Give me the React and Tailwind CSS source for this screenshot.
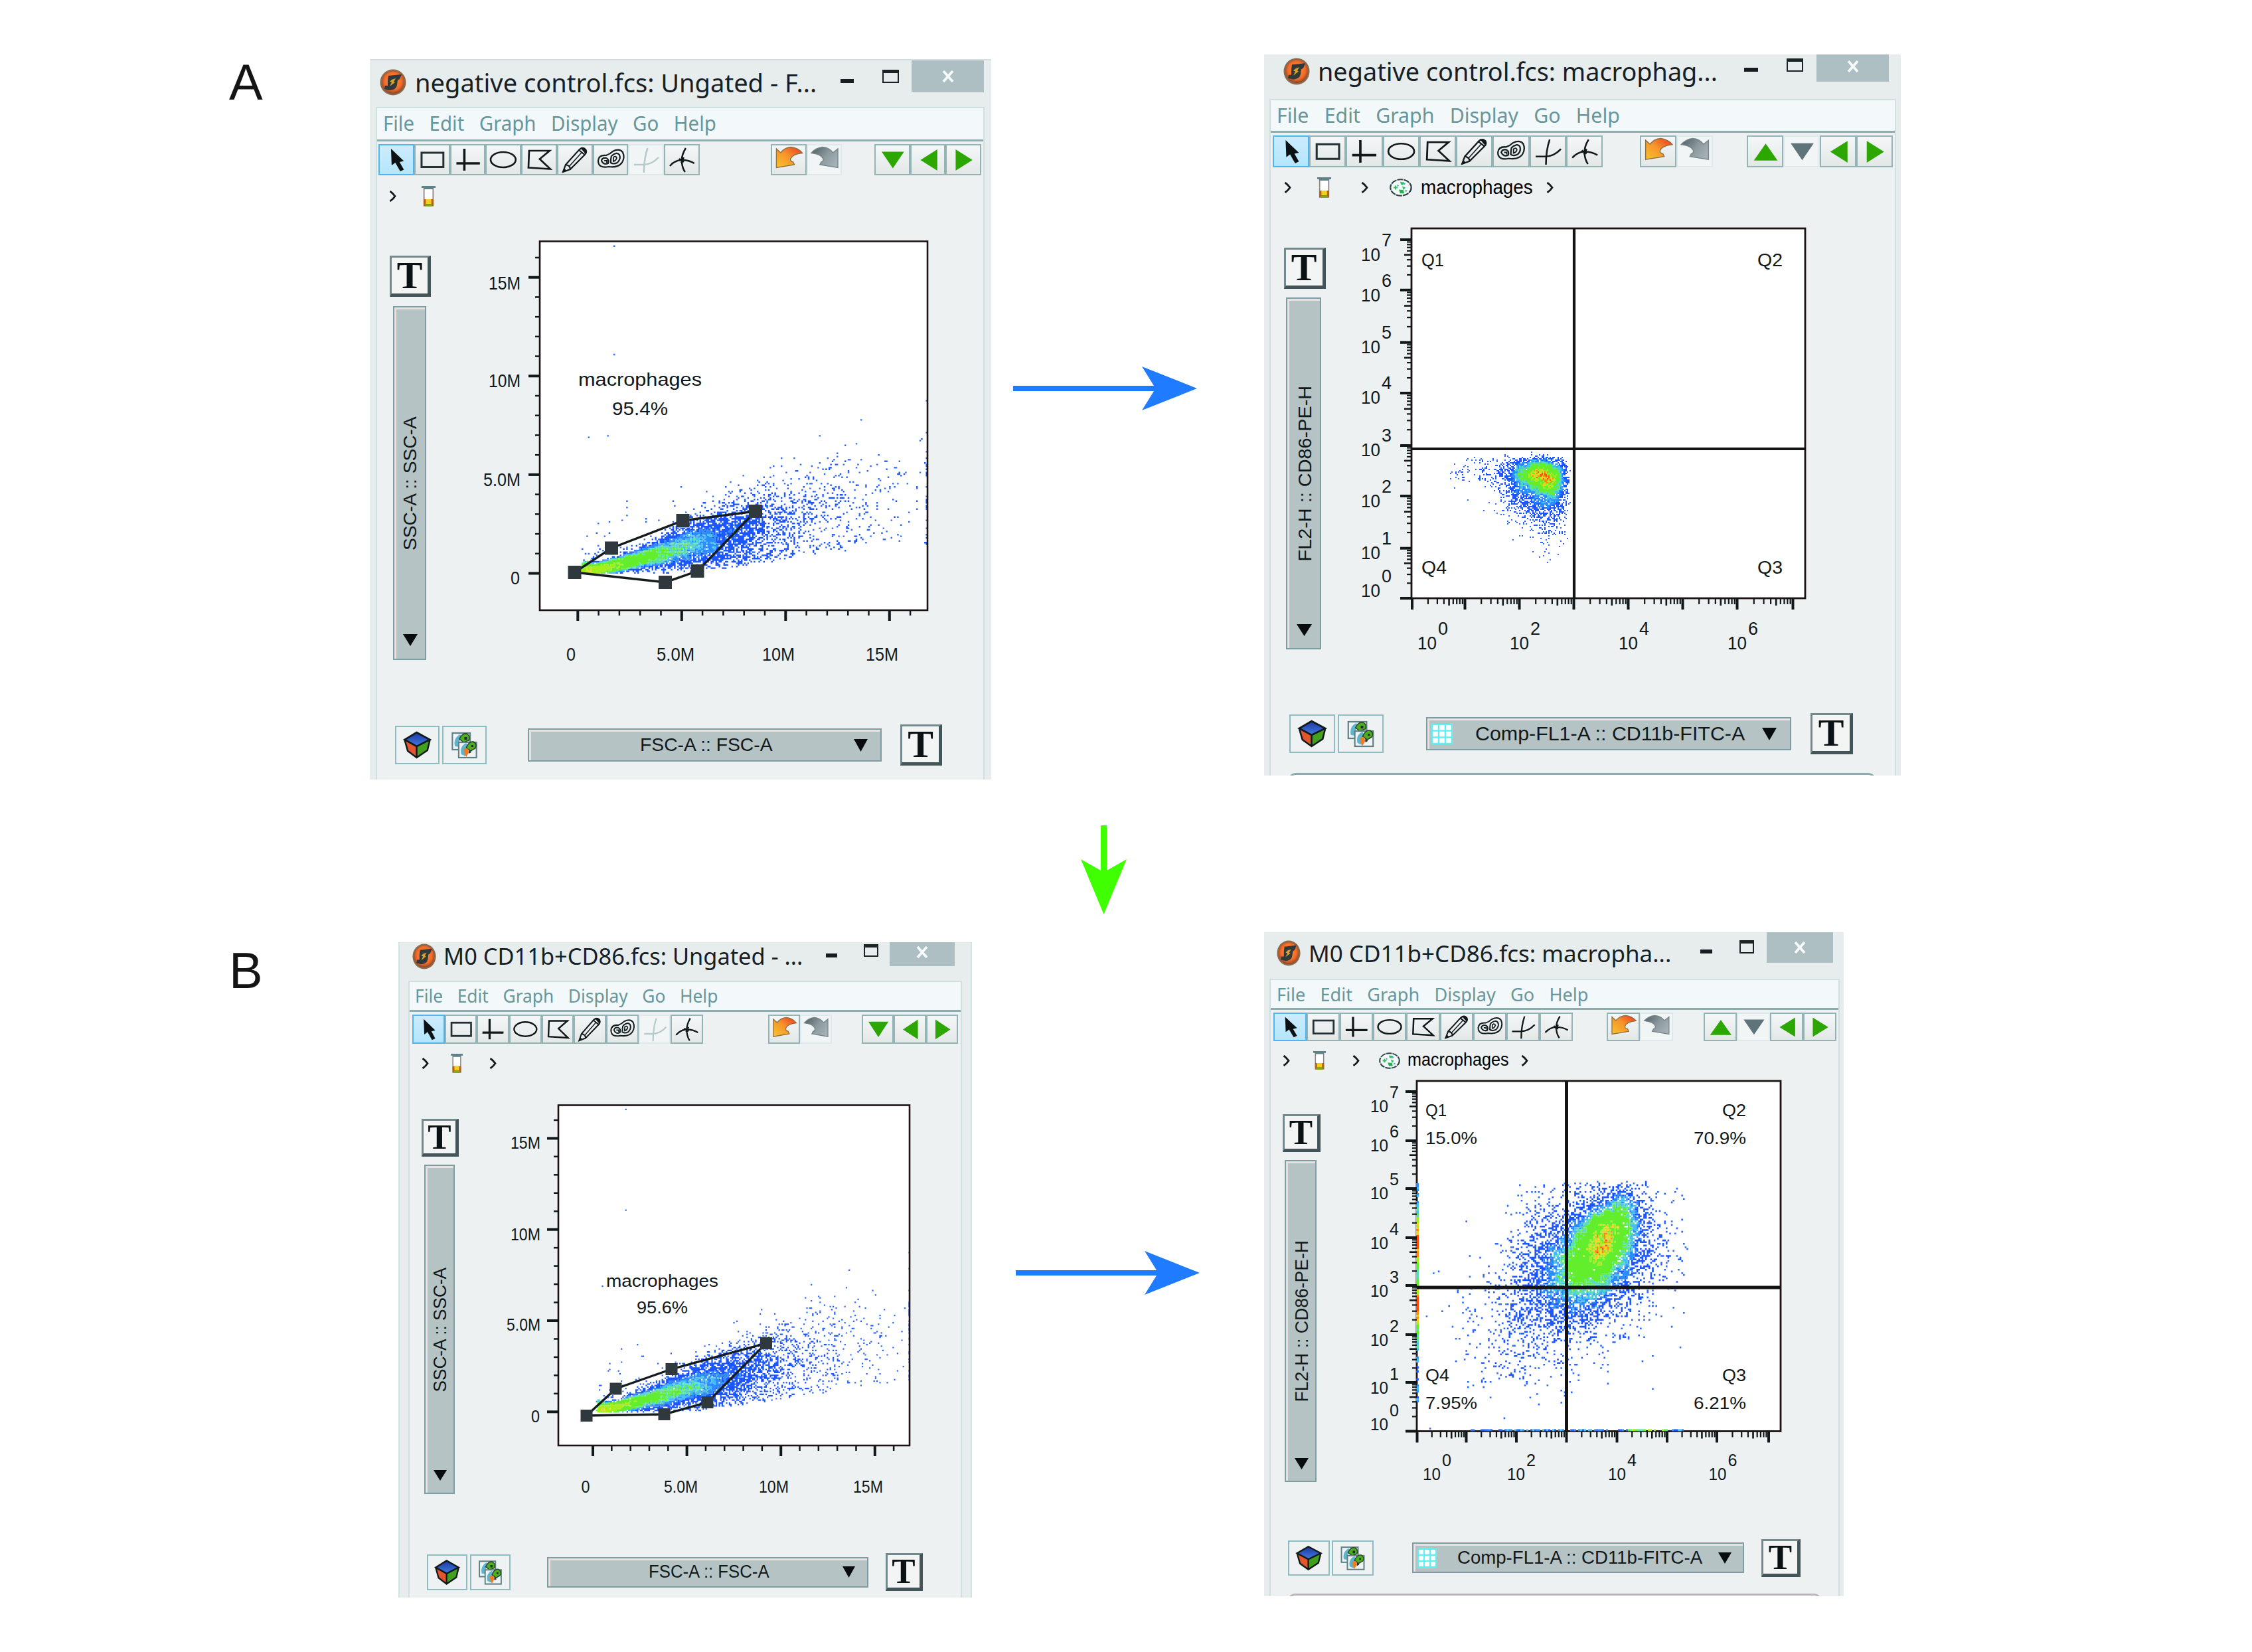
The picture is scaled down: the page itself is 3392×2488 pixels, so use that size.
import { useLayoutEffect, useMemo, useRef } from 'react';

// Small seeded generator, so that the plots look the same on every load
function createRandom(seed) {
  let s = seed;
  const next = () => {
    s = (s + 0x6d2b79f5) | 0;
    let t = Math.imul(s ^ (s >>> 15), 1 | s);
    t = (t + Math.imul(t ^ (t >>> 7), 61 | t)) ^ t;
    return ((t ^ (t >>> 14)) >>> 0) / 4294967296;
  };
  const normal = () => Math.sqrt(-2 * Math.log(1 - next())) * Math.cos(2 * Math.PI * next());
  const exp = (scale) => -Math.log(1 - next()) * scale;
  return { next, normal, exp };
}

// Forward / side scatter events, in millions
function scatterEvents(seed) {
  const r = createRandom(seed);
  const points = [];
  for (let i = 0; i < 10500; i++) {
    const k = r.next();
    let x;
    let slope;
    if (k < 0.45) {
      x = 0.15 + r.exp(1.7);
      slope = 0.25 + r.normal() * 0.07;
    } else if (k < 0.84) {
      x = 4.8 + r.normal() * 2.1;
      slope = 0.27 + r.normal() * 0.1;
    } else {
      x = 8.6 + r.normal() * 2.9;
      slope = 0.28 + r.normal() * 0.12;
    }
    if (x < 0.2) continue;
    if (x > 9 && r.next() < 0.2) continue;
    let y = x * slope + r.normal() * 0.08;
    if (r.next() < 0.012) y += r.exp(0.9);
    const floor = x > 6 ? (x - 6) * 0.15 + 0.15 : 0.06;
    if (y < floor) y = floor + r.next() * 0.6;
    if (y > 3.3 + x * 0.27) continue;
    points.push([Math.min(x, 16.75), y]);
  }
  for (let i = 0; i < 26; i++) points.push([16.75, 1.2 + r.next() * 5]);
  for (let i = 0; i < 60; i++) points.push([11 + r.next() * 5.7, 1.5 + r.next() * 4.3]);
  points.push([1.75, 16.6], [1.75, 11.1], [0.5, 6.9], [1.4, 7], [16.75, 8.8], [13.6, 7.8], [2.3, 3.7], [11.6, 7]);
  return points;
}

function controlEvents() {
  const r = createRandom(11);
  const points = [];
  for (let i = 0; i < 6400; i++) {
    const k = r.next();
    let x;
    let y;
    if (k < 0.42) {
      x = 2319 + r.normal() * 19;
      y = 713 + r.normal() * 11;
    } else if (k < 0.6) {
      x = 2336 + r.normal() * 10;
      y = 728 + r.normal() * 14;
    } else if (k < 0.9) {
      x = 2313 + r.normal() * 25;
      y = 733 + r.normal() * 22;
    } else if (k < 0.95) {
      x = 2295 - r.exp(38);
      y = 708 + r.normal() * 13;
    } else {
      x = 2330 + r.normal() * 17;
      y = 755 + r.exp(26);
    }
    if (x > 2364 - r.exp(5) || y < 690 - r.exp(4) || x < 2183 || y > 850) continue;
    points.push([x, y]);
  }
  return points;
}

function stainedEvents() {
  const r = createRandom(29);
  const points = [];
  for (let i = 0; i < 10200; i++) {
    const k = r.next();
    const a = r.normal();
    const b = r.normal();
    let x;
    let y;
    if (k < 0.3) {
      x = 2418 + a * 22;
      y = 1862 - a * 14 + b * 26;
    } else if (k < 0.62) {
      x = 2396 + a * 36;
      y = 1896 - a * 15 + b * 36;
    } else if (k < 0.93) {
      x = 2388 + a * 56;
      y = 1893 - a * 8 + b * 52;
    } else {
      x = 2325 + a * 58;
      y = 1985 - a * 10 + b * 50;
    }
    if (x < 2140 || y < 1778 || y > 2150 || x > 2540) continue;
    points.push([x, y]);
  }
  return points;
}

const HEAT = ['#2f68ff', '#1c56ff', '#2b8cff', '#45bff0', '#58dfae', '#62ee2c', '#a4ee1c', '#f0d31c', '#ff8a12', '#ff4a08'];

// Bins events into square cells and returns one path for each heat level
function densityPaths(points, cell, limits) {
  const grid = new Map();
  points.forEach(([x, y]) => {
    const key = `${Math.round(x / cell)},${Math.round(y / cell)}`;
    grid.set(key, (grid.get(key) || 0) + 1);
  });
  const paths = HEAT.map(() => '');
  const jitter = createRandom(5);
  grid.forEach((_, key) => {
    const [cx, cy] = key.split(',').map(Number);
    let total = 0;
    for (let dx = -2; dx <= 2; dx++) {
      for (let dy = -2; dy <= 2; dy++) total += grid.get(`${cx + dx},${cy + dy}`) || 0;
    }
    const density = (total / 25) * (0.75 + jitter.next() * 0.5);
    let level = limits.findIndex((limit) => density < limit);
    if (level < 0) level = limits.length;
    const c = cell.toFixed(2);
    paths[level] += `M${(cx * cell).toFixed(1)} ${(cy * cell).toFixed(1)}h${c}v${c}h-${c}z`;
  });
  return paths;
}

function Heat({ points, cell, limits }) {
  const paths = useMemo(() => densityPaths(points, cell, limits), [points, cell, limits]);
  return paths.map((d, i) => d && <path key={HEAT[i]} d={d} fill={HEAT[i]} />);
}

// Squeezes a line of text to the width of its box
function Fit({ className, inner = '', children }) {
  const box = useRef(null);
  const line = useRef(null);
  useLayoutEffect(() => {
    const scale = box.current.clientWidth / line.current.offsetWidth;
    line.current.style.transform = `scaleX(${scale})`;
  }, []);
  return (
    <div ref={box} className={`shrink-0 ${className}`}>
      <span ref={line} className={`inline-flex origin-left whitespace-nowrap ${inner}`}>{children}</span>
    </div>
  );
}

function Label({ x, y, w, size = 27, children }) {
  return (
    <text x={x} y={y - 1} fontSize={size} textLength={w} lengthAdjust="spacingAndGlyphs" fill="#10181a" fontFamily="Liberation Sans, Arial, sans-serif">
      {children}
    </text>
  );
}

function AppIcon({ className }) {
  return (
    <svg viewBox="0 0 40 40" preserveAspectRatio="none" className={`shrink-0 ${className}`}>
      <defs>
        <radialGradient id="ball" cx="0.5" cy="0.45" r="0.55">
          <stop offset="0" stopColor="#ff9a2c" />
          <stop offset="0.7" stopColor="#f26a2a" />
          <stop offset="1" stopColor="#8d4526" />
        </radialGradient>
      </defs>
      <circle cx="20" cy="20" r="19.5" fill="#8a6a4c" />
      <circle cx="20" cy="20" r="17" fill="url(#ball)" />
      <path d="M13 10 L33 8 L30 15 L27 17 L26 24 Q25 31 15 32 L7 30 L8 25 L12 25 L12 17 Z" fill="#30383a" />
      <path d="M18 16 L24 14 L21 19 L23 20 L15 26 L18 20 L15 19 Z" fill="#d9a22e" />
    </svg>
  );
}

const GLYPHS = {
  pointer: <path d="M19 7 L20 32 L25.500 28 L33 41 L38.500 38.500 L32 27 L38.500 25.500 Z" fill="#0c1214" />,
  rect: <rect x="11" y="13" width="33" height="21.500" fill="none" stroke="#243034" strokeWidth="3" />,
  quad: <path d="M21.500 7 V40 M9.500 29 H45" fill="none" stroke="#10181a" strokeWidth="3.600" />,
  ellipse: <ellipse cx="27" cy="23.500" rx="19" ry="11.500" fill="none" stroke="#10181a" strokeWidth="2.600" />,
  polygon: <path d="M12 10 H43 L28 22.500 L44 37.500 L11 35.500 Z" fill="none" stroke="#10181a" strokeWidth="2.700" />,
  pencil: (
    <g fill="none" stroke="#10181a" strokeWidth="2.200">
      <path d="M9 42 L13 31 L34 8 Q39 4 43 8 Q46 12 42 16 L20 38 Z M13 31 Q20 32 20 38 M33 9 L42 16" />
      <path d="M18 34 L37 13" strokeWidth="1.500" />
      <path d="M9 42 L11 37 L14 40 Z M36 6 L44 8 L43 14 Z" fill="#10181a" strokeWidth="1" />
    </g>
  ),
  contour: (
    <g fill="none" stroke="#141d20" strokeWidth="2.200">
      <path d="M8 25 Q9 16 20 17 Q26 15 30 11 Q40 6 45 12 Q49 20 44 28 Q38 36 24 34 Q8 37 8 25 Z" />
      <path d="M28 18 Q36 11 40 16 Q43 22 37 28 Q31 31 27 28 Q27 22 28 18 M13 25 Q14 20 20 21 Q25 23 23 29 Q16 32 13 25 Z" />
      <path d="M17 25 H21 V28 M31 20 Q35 17 36 21 Q35 25 31 26 Z" strokeWidth="1.800" />
    </g>
  ),
  angled: <path d="M29.500 6 Q24 22 24 43 M9 31 H23 Q36 31 46 20" fill="none" stroke="currentColor" strokeWidth="2.500" />,
  tripod: <path d="M33 6 Q27 16 27 24 Q27 35 32 42 M9 33 Q17 24 27 24 Q38 24 46 29 M23 22 L30 27 M30 20 L26 28" fill="none" stroke="#10181a" strokeWidth="2.500" />,
  undo: (
    <g>
      <defs>
        <linearGradient id="undo" x1="0" y1="1" x2="1" y2="0">
          <stop offset="0" stopColor="#f6c42c" />
          <stop offset="0.5" stopColor="#f6952c" />
          <stop offset="1" stopColor="#ee3420" />
        </linearGradient>
      </defs>
      <path d="M8.500 7 V35.500 L36 31 L34 27 Q29 26 30 22 Q33 15 48 13.500 Q42 6 31 4.500 Q21 5 15 13 Z" fill="url(#undo)" stroke="#8d7040" strokeWidth="1.400" />
    </g>
  ),
  redo: (
    <g>
      <defs>
        <linearGradient id="redo" x1="0" y1="0" x2="1" y2="0.6">
          <stop offset="0" stopColor="#4c5c62" />
          <stop offset="0.6" stopColor="#8c999e" />
          <stop offset="1" stopColor="#a3afb3" />
        </linearGradient>
      </defs>
      <path d="M47.500 7 V35.500 L20 31 L22 27 Q26 26 25 22 Q22 15 7 13.500 Q13 6 24 4.500 Q34 5 40 13 Z" fill="url(#redo)" stroke="#75858a" strokeWidth="1.400" />
    </g>
  ),
  up: <path d="M28 12 L45.500 37 H10.500 Z" fill="#2ca600" />,
  down: <path d="M28 36.500 L45 11.500 H11 Z" fill="#2ca600" />,
  downOff: <path d="M28 36.500 L45 11.500 H11 Z" fill="#5f737b" />,
  left: <path d="M15.500 24 L41 8 V40 Z" fill="#2ca600" />,
  right: <path d="M41 24 L15.500 8 V40 Z" fill="#2ca600" />,
};

const ENABLED = 'border-[#93b3b7] bg-linear-to-b from-[#f4f6f7] to-[#e3e8e7] text-[#10181a]';
const DISABLED = 'border-[#dfe9eb] bg-[#f1f5f6] text-[#b6c9cc]';
const SELECTED = 'border-[#4eb5f2] bg-linear-to-b from-[#cdebfd] to-[#b3e6fb] text-[#10181a]';

function ToolGroup({ className, names, off = [] }) {
  return (
    <div className={`flex h-full shrink-0 ${className}`}>
      {names.map((name) => {
        const tone = name === 'pointer' ? SELECTED : off.includes(name) ? DISABLED : ENABLED;
        return (
          <div key={name} className={`min-w-0 flex-1 border-[2.5px] ${tone}`}>
            <svg viewBox="2 2 50 43" preserveAspectRatio="none" className="block h-full w-full">{GLYPHS[name]}</svg>
          </div>
        );
      })}
    </div>
  );
}

function Chevron({ className }) {
  return (
    <svg viewBox="0 0 11 17" className={`h-[17px] w-[11px] shrink-0 ${className}`}>
      <path d="M1.500 1 Q6 4 9 8.500 Q6 13 1.500 16" fill="none" stroke="#10181a" strokeWidth="2.800" />
    </svg>
  );
}

function Tube({ className }) {
  return (
    <svg viewBox="0 0 20 31" preserveAspectRatio="none" className={`shrink-0 ${className}`}>
      <path d="M3.500 3 H16.500 V30 H3.500 Z" fill="#fff" stroke="#8c7f80" strokeWidth="1.600" />
      <path d="M0 0 H20 V3 H17 L16 5 H4 L3 3 H0 Z" fill="#5f8187" />
      <path d="M3 20 H17 V30 H3 Z" fill="#b9600f" />
      <path d="M6 20 H14 V27 H6 Z" fill="#f3cf1b" />
      <path d="M5 27.500 H15 V31 H5 Z" fill="#7fa61d" />
    </svg>
  );
}

function Cells({ className }) {
  return (
    <svg viewBox="0 0 34 28" preserveAspectRatio="none" className={`shrink-0 ${className}`}>
      <ellipse cx="17" cy="14" rx="15.700" ry="12.700" fill="#f2f8f8" stroke="#2c4146" strokeWidth="2.200" strokeDasharray="9 1.200" />
      <path d="M16 5 L22 6 L20 10 L17 9 Z M6 13 H12 V15 H6 Z M8 11 H10 V17 H8 Z M19 12 L24 14 L21 18 Z" fill="#2fbf58" />
      <path d="M14 17 L21 18 L22 23 L16 23 Z" fill="#20b44e" />
      <path d="M20 5 L24 8 L22 10 Z M11 9 L14 11 L12 13 Z M24 17 L27 19 L24 21 Z" fill="#3ea7c4" />
    </svg>
  );
}

function TextButton({ className }) {
  return (
    <div className={`flex shrink-0 items-center justify-center border-t-[3px] border-r-[5px] border-b-[5px] border-l-[3px] border-t-[#72898d] border-r-[#435559] border-b-[#435559] border-l-[#72898d] bg-[#f3f5f5] font-['Liberation_Serif',serif] leading-none font-bold text-[#0c1214] ${className}`}>
      T
    </div>
  );
}

function CubeButton({ className }) {
  return (
    <div className={`shrink-0 border-[2.5px] border-[#8fbcc1] bg-[#eff2f3] ${className}`}>
      <svg viewBox="2 2 66 54" preserveAspectRatio="none" className="block h-full w-full">
        <defs>
          <linearGradient id="cubeTop" x1="0" y1="0" x2="0" y2="1">
            <stop offset="0" stopColor="#1a369c" />
            <stop offset="1" stopColor="#417ce4" />
          </linearGradient>
        </defs>
        <path d="M34 10 L55 21 L34 31 L15 21 Z" fill="url(#cubeTop)" />
        <path d="M15 21 L34 31 V48 L20 38 Z" fill="#e2562c" />
        <path d="M55 21 L34 31 V48 L51 37 Z" fill="#43a01f" />
        <path d="M34 10 L55 21 L34 31 L15 21 Z M15 21 L20 38 L34 48 L51 37 L55 21 M34 31 V48" fill="none" stroke="#10181a" strokeWidth="2.600" />
      </svg>
    </div>
  );
}

function OverlayButton({ className }) {
  return (
    <div className={`shrink-0 border-[2.5px] border-[#8fbcc1] bg-[#eff2f3] ${className}`}>
      <svg viewBox="2 2 66 54" preserveAspectRatio="none" className="block h-full w-full">
        <rect x="16" y="11" width="28" height="25" fill="#eef4f5" stroke="#5f7f85" strokeWidth="2.200" />
        <path d="M20 31 Q17 19 28 13 L32 17 Q24 24 27 32 Z" fill="#5fb4cd" />
        <path d="M27 20 Q32 10 39 12 Q45 16 42 22 L34 25 Z" fill="#4fae20" stroke="#26402a" strokeWidth="1.500" />
        <rect x="26" y="25" width="28" height="23" fill="#eef4f5" stroke="#5f7f85" strokeWidth="2.200" />
        <path d="M30 43 Q27 31 38 26 L40 32 Q34 38 37 46 Z" fill="#5fb4cd" />
        <path d="M38 33 Q42 23 49 24 Q56 28 52 34 L45 38 Z" fill="#4fae20" stroke="#26402a" strokeWidth="1.500" />
        <path d="M34 35 L40 34 L42 40 L38 47 L35 42 Z" fill="#f4791f" />
        <path d="M35 17 h4 v4 h-4 z M46 29 h3 v3 h-3 z M42 36 l4 4 -4 2 z" fill="#1f2c2c" />
      </svg>
    </div>
  );
}

function GridIcon({ className }) {
  return (
    <svg viewBox="0 0 32 31" preserveAspectRatio="none" className={className}>
      <rect x="1" y="1" width="30" height="29" fill="#fff" stroke="#5ff0f4" strokeWidth="2.500" />
      <path d="M11 0 V31 M21 0 V31 M0 10.500 H32 M0 20.500 H32" stroke="#5ff0f4" strokeWidth="2.500" />
    </svg>
  );
}

const BAR = "border-[2.5px] border-[#7d9da2] bg-[#b5c3c5] font-['Liberation_Sans',Arial,sans-serif] text-[#10181a] shadow-[inset_3px_3px_0_#e9e1e1]";

function Triangle({ className }) {
  return (
    <svg viewBox="0 0 22 18" preserveAspectRatio="none" className={className}>
      <path d="M0 0 H22 L11 18 Z" fill="#080c0e" />
    </svg>
  );
}

// Linear plot of SSC-A against FSC-A with its gate
function LinearPlot({ p }) {
  const points = useMemo(
    () => scatterEvents(p.seed).map(([x, y]) => [p.x0 + (x * p.x5) / 5, p.y0 - (y * p.y5) / 5]),
    [p]
  );
  const ticks = Array.from({ length: 17 }, (_, i) => i);
  const gate = p.gate.map((v) => v.join(',')).join(' ');
  return (
    <svg viewBox={p.view} className={`shrink-0 overflow-visible ${p.className}`}>
      <rect x={p.left} y={p.top} width={p.right - p.left} height={p.bottom - p.top} fill="#fff" />
      <Heat points={points} cell={p.cell} limits={p.limits} />
      <rect x={p.left} y={p.top} width={p.right - p.left} height={p.bottom - p.top} fill="none" stroke="#1c1214" strokeWidth="2.600" />
      {ticks.map((i) => {
        const major = i % 5 === 0;
        const x = p.x0 + (i * p.x5) / 5;
        const y = p.y0 - (i * p.y5) / 5;
        return (
          <g key={i} stroke="#10181a">
            <line x1={x} x2={x} y1={p.bottom} y2={p.bottom + (major ? 16 : 8)} strokeWidth={major ? 4 : 2.5} />
            <line x1={p.left - (major ? 17 : 7)} x2={p.left} y1={y} y2={y} strokeWidth={major ? 4 : 2.5} />
          </g>
        );
      })}
      <polygon points={gate} fill="none" stroke="#141c1e" strokeWidth="3.400" />
      {p.gate.map(([x, y]) => (
        <rect key={x} x={x - p.handle / 2} y={y - p.handle / 2} width={p.handle} height={p.handle} fill="#2f393d" />
      ))}
      {p.labels.map(([text, x, y, w]) => (
        <Label key={`${text}${x}`} x={x} y={y} w={w} size={p.font}>{text}</Label>
      ))}
    </svg>
  );
}

function logTicks(majors) {
  const out = [];
  majors.forEach((at, i) => {
    out.push([at, 2]);
    const next = majors[i + 1];
    if (next === undefined) return;
    for (let n = 2; n < 10; n++) out.push([at + (next - at) * Math.log10(n), n === 5 ? 1 : 0]);
  });
  return out;
}

const Y_TICK = [7, 11, 17];
const X_TICK = [9, 11, 17];
const TICK_WIDTH = [2.2, 2.6, 4];

// Bi-exponential plot split into four quadrants
function QuadrantPlot({ p }) {
  const points = useMemo(() => p.events(), [p]);
  const edges = useMemo(() => {
    if (!p.piled) return [];
    const r = createRandom(3);
    const out = [];
    for (let y = 1782; y < 2112; y += 3) {
      const heat = 7 * Math.exp(-(((y - 1868) / 38) ** 2)) + 6 * Math.exp(-(((y - 1958) / 24) ** 2)) + 3 * Math.exp(-(((y - 1990) / 30) ** 2));
      const level = Math.round(heat + r.next() * 2);
      if (heat > 0.5 || r.next() < 0.5) out.push([2133, y, 4, 3, HEAT[Math.min(9, level + 1)]]);
    }
    for (let x = 2212; x < 2534; x += 3) {
      const busy = x > 2450 && x < 2510;
      if (r.next() < 0.75) out.push([x, 2152.500, 3, 3, HEAT[busy ? 4 + Math.floor(r.next() * 3) : Math.floor(r.next() * 4)]]);
    }
    return out;
  }, [p]);
  return (
    <svg viewBox={p.view} className={`shrink-0 overflow-visible ${p.className}`}>
      <rect x={p.left} y={p.top} width={p.right - p.left} height={p.bottom - p.top} fill="#fff" />
      <Heat points={points} cell={p.cell} limits={p.limits} />
      <rect x={p.left} y={p.top} width={p.right - p.left} height={p.bottom - p.top} fill="none" stroke="#1c1214" strokeWidth="2.800" />
      {edges.map(([x, y, w, h, fill]) => (
        <rect key={`${x}-${y}`} x={x} y={y} width={w} height={h} fill={fill} />
      ))}
      <path d={`M${p.crossX} ${p.top} V${p.bottom} M${p.left} ${p.crossY} H${p.right}`} stroke="#141414" strokeWidth={p.crossWidth} />
      {logTicks(p.yMajors).map(([y, kind]) => (
        <line key={y} x1={p.left - Y_TICK[kind]} x2={p.left} y1={y} y2={y} stroke="#10181a" strokeWidth={TICK_WIDTH[kind]} />
      ))}
      {logTicks(p.xMajors).map(([x, kind]) => (
        <line key={x} y1={p.bottom} y2={p.bottom + X_TICK[kind]} x1={x} x2={x} stroke="#10181a" strokeWidth={TICK_WIDTH[kind]} />
      ))}
      {p.yLabels.map((y, i) => (
        <g key={y}>
          <Label x={p.yLabelX} y={y} w={p.tenWidth} size={p.font}>10</Label>
          <Label x={p.yLabelX + p.tenWidth + 2} y={y - p.lift} w={p.digit} size={p.font}>{i}</Label>
        </g>
      ))}
      {p.xLabels.map((x, i) => (
        <g key={x}>
          <Label x={x} y={p.xLabelY} w={p.tenWidth} size={p.font}>10</Label>
          <Label x={x + p.tenWidth + 2} y={p.xLabelY - p.lift} w={p.digit} size={p.font}>{i * 2}</Label>
        </g>
      ))}
      {p.labels.map(([text, x, y, w]) => (
        <Label key={text} x={x} y={y} w={w} size={p.font}>{text}</Label>
      ))}
    </svg>
  );
}

const TOOLS = ['pointer', 'rect', 'quad', 'ellipse', 'polygon', 'pencil', 'contour', 'angled', 'tripod'];
const MENU = ['File', 'Edit', 'Graph', 'Display', 'Go', 'Help'];

function FlowWindow({ w }) {
  return (
    <section className={`flex shrink-0 flex-col overflow-hidden bg-[#e7ecec] ${w.frame}`}>
      <header className={`flex shrink-0 items-start ${w.header}`}>
        <AppIcon className={w.icon} />
        <Fit className={`font-['Noto_Sans','Open_Sans',sans-serif] text-[#161e26] ${w.title}`}>{w.name}</Fit>
        <div className={`h-[6px] shrink-0 bg-[#161c1f] ${w.minimise}`} />
        <div className={`shrink-0 border-[2.5px] border-t-[5px] border-[#1c2326] ${w.maximise}`} />
        <div className={`flex shrink-0 items-center justify-center bg-[#adbfc2] ${w.close}`}>
          <svg viewBox="0 0 20 18" className="h-[18px] w-[20px]">
            <path d="M3 1 L17 17 M17 1 L3 17" stroke="#f6fafa" strokeWidth="3.800" />
          </svg>
        </div>
      </header>
      <div className={`flex min-h-0 flex-1 flex-col border-x-2 border-[#d0e0e1] bg-[#edf1f2] ${w.inner}`}>
        <nav className={`shrink-0 border-t-2 border-b-[3px] border-t-[#d0e0e1] border-b-[#8cacb0] bg-[#f3f8fa] ${w.menu}`}>
          <Fit className={w.menuText} inner="gap-[23px] font-['Noto_Sans','Open_Sans',sans-serif] text-[#67969b]">
            {MENU.map((item) => <span key={item}>{item}</span>)}
          </Fit>
        </nav>
        <div className={`mt-1 flex shrink-0 ${w.toolbar}`}>
          <ToolGroup className={w.tools} names={TOOLS} off={w.child ? [] : ['angled']} />
          <ToolGroup className={w.history} names={['undo', 'redo']} off={['redo']} />
          <ToolGroup className={w.arrows} names={w.child ? ['up', 'downOff', 'left', 'right'] : ['down', 'left', 'right']} off={['downOff']} />
        </div>
        <div className={`flex shrink-0 items-center ${w.crumbs}`}>
          <Chevron className={w.crumb1} />
          <Tube className={w.tube} />
          {w.crumb2 && <Chevron className={w.crumb2} />}
          {w.child && (
            <>
              <Cells className={w.cells} />
              <Fit className={`pb-0.5 font-['Liberation_Sans',Arial,sans-serif] leading-none text-black ${w.population}`}>macrophages</Fit>
              <Chevron className={w.crumb3} />
            </>
          )}
        </div>
        <div className={`flex shrink-0 ${w.main}`}>
          <div className={`flex shrink-0 flex-col items-center ${w.sidebar}`}>
            <TextButton className={w.textTop} />
            <div className={`mr-[3px] grid shrink-0 place-items-center overflow-hidden ${BAR} ${w.yBar}`}>
              <div className="ml-[3px] flex size-0 items-center justify-center [grid-area:1/1]">
                <div className="-rotate-90">
                  <Fit className={`leading-none ${w.yText}`}>{w.yAxis}</Fit>
                </div>
              </div>
              <Triangle className={`ml-0.5 self-end [grid-area:1/1] ${w.yArrow}`} />
            </div>
          </div>
          {w.child ? <QuadrantPlot p={w.plot} /> : <LinearPlot p={w.plot} />}
        </div>
        <footer className={`flex shrink-0 items-center ${w.footer}`}>
          <CubeButton className={w.cube} />
          <OverlayButton className={w.overlay} />
          <div className={`grid shrink-0 items-center ${BAR} ${w.xBar}`}>
            {w.child && <GridIcon className={`ml-1.5 [grid-area:1/1] ${w.grid}`} />}
            <Fit className={`ml-1 justify-self-center leading-none [grid-area:1/1] ${w.xText}`}>{w.xAxis}</Fit>
            <Triangle className={`justify-self-end [grid-area:1/1] ${w.xArrow}`} />
          </div>
          <TextButton className={w.textBottom} />
        </footer>
        {w.child && <div className={`h-5 shrink-0 rounded-t-xl border-[3px] bg-white ${w.panel}`} />}
      </div>
    </section>
  );
}

const CONTROL_UNGATED = {
  name: 'negative control.fcs: Ungated - F...',
  frame: 'w-[936px] h-[1085px] mt-[89px] border-t-2 border-[#d0dfe0]',
  header: 'h-[70px]',
  icon: 'ml-[15px] mt-[13px] size-[40px]',
  title: 'ml-[13px] mt-[8px] w-[605px] text-[38px] leading-[50px]',
  minimise: 'ml-[36px] mt-[28px] w-[20px]',
  maximise: 'ml-[43px] mt-[14px] w-[25px] h-[20px]',
  close: 'ml-[19px] w-[109px] h-[48px]',
  inner: 'ml-[9px] w-[917px]',
  menu: 'h-[52px]',
  menuText: 'ml-[9px] w-[502px] text-[30px] leading-[45px]',
  toolbar: 'ml-[2px] h-[47px]',
  tools: 'w-[484px]',
  history: 'ml-[107px] w-[107px]',
  arrows: 'ml-[49px] w-[161px]',
  crumbs: 'h-[62px]',
  crumb1: 'ml-[18px]',
  tube: 'ml-[38px] w-[21px] h-[31px]',
  main: 'h-[744px]',
  sidebar: 'ml-[19px] w-[62px]',
  textTop: 'mt-[59px] w-[62px] h-[62px] text-[58px]',
  yBar: 'mt-[14px] w-[50px] h-[533px]',
  yText: 'w-[202px] text-[28px]',
  yArrow: 'mb-[19px] w-[22px] h-[18px]',
  yAxis: 'SSC-A :: SSC-A',
  footer: 'h-[104px]',
  cube: 'ml-[27px] w-[67px] h-[58px]',
  overlay: 'ml-[4px] w-[67px] h-[58px]',
  xBar: 'ml-[62px] w-[533px] h-[50px]',
  xText: 'w-[200px] text-[28px]',
  xArrow: 'mr-[19px] w-[21px] h-[19px]',
  xAxis: 'FSC-A :: FSC-A',
  textBottom: 'ml-[28px] w-[63px] h-[62px] text-[58px]',
  plot: {
    className: 'w-[832px] h-[744px]',
    view: '649 326 832 744',
    seed: 7,
    left: 813, top: 363.5, right: 1397, bottom: 919,
    x0: 870.3, x5: 156.5, y0: 863.5, y5: 148.6,
    cell: 2.4,
    limits: [0.12, 2.3, 3.4, 4.4, 5.8, 15, 34, 50, 70],
    font: 27,
    handle: 20,
    gate: [[865.5, 862], [921, 825.5], [1028.5, 784], [1138, 770], [1050.5, 860], [1002, 877]],
    labels: [
      ['15M', 736, 436.5, 48], ['10M', 736, 584, 48], ['5.0M', 728, 733, 56], ['0', 769, 881, 14],
      ['0', 853, 995.5, 14], ['5.0M', 989, 995.5, 57], ['10M', 1148, 995.5, 49], ['15M', 1304, 995.5, 49],
      ['macrophages', 871, 581.5, 186], ['95.4%', 922, 625.5, 84],
    ],
  },
};

const CONTROL_GATED = {
  child: true,
  name: 'negative control.fcs: macrophag...',
  frame: 'ml-[101px] w-[959px] h-[1086px] mt-[82px]',
  header: 'h-[67px]',
  icon: 'ml-[29px] mt-[5px] w-[40px] h-[41px]',
  title: 'ml-[12px] w-[602px] text-[38px] leading-[50px]',
  minimise: 'ml-[40px] mt-[20px] w-[21px]',
  maximise: 'ml-[43px] mt-[6px] w-[25px] h-[20px]',
  close: 'ml-[20px] w-[109px] h-[41px] pb-[6px]',
  inner: 'ml-[8px] w-[944px]',
  menu: 'h-[51px]',
  menuText: 'ml-[9px] w-[517px] text-[30px] leading-[46px]',
  toolbar: 'ml-[3px] h-[48px]',
  tools: 'w-[497px]',
  history: 'ml-[56px] w-[110px]',
  arrows: 'ml-[51px] w-[220px]',
  crumbs: 'h-[61px]',
  crumb1: 'ml-[20px]',
  tube: 'ml-[39px] w-[21px] h-[31px]',
  crumb2: 'ml-[45px]',
  cells: 'ml-[32px] w-[34px] h-[27px]',
  population: 'ml-[13px] w-[169px] text-[30px]',
  crumb3: 'ml-[20px]',
  main: 'h-[733px]',
  sidebar: 'ml-[19px] w-[64px]',
  textTop: 'mt-[60px] w-[63px] h-[62px] text-[58px]',
  yBar: 'mt-[13px] w-[53px] h-[530px]',
  yText: 'w-[265px] text-[28px]',
  yArrow: 'mb-[18px] w-[23px] h-[18px]',
  yAxis: 'FL2-H :: CD86-PE-H',
  footer: 'h-[118px]',
  cube: 'ml-[28px] w-[69px] h-[58px]',
  overlay: 'ml-[4px] w-[69px] h-[58px]',
  xBar: 'ml-[64px] w-[550px] h-[50px]',
  grid: 'w-[32px] h-[31px]',
  xText: 'w-[406px] text-[30px]',
  xArrow: 'mr-[20px] w-[22px] h-[19px]',
  xAxis: 'Comp-FL1-A :: CD11b-FITC-A',
  textBottom: 'ml-[29px] w-[64px] h-[62px] text-[58px]',
  panel: 'ml-[26px] w-[886px] border-[#8cacb0]',
  plot: {
    className: 'w-[857px] h-[733px]',
    view: '1997 313 857 733',
    events: controlEvents,
    left: 2126, top: 344, right: 2719, bottom: 901,
    crossX: 2371, crossY: 676, crossWidth: 4.2,
    cell: 2,
    limits: [0.15, 1.6, 2.5, 3.3, 4.2, 7.6, 8.8, 10.2, 11.4],
    font: 27,
    yMajors: [901, 825.7, 747, 671, 592, 515.8, 436.8, 361],
    xMajors: [2127, 2206.5, 2288.5, 2370.5, 2452.5, 2534.5, 2616.5, 2700.5],
    yLabelX: 2050, tenWidth: 29, digit: 15, lift: 22,
    yLabels: [899.5, 843, 765, 688, 609, 533, 455, 393.5],
    xLabels: [2135, 2274, 2438, 2602], xLabelY: 979,
    labels: [['Q1', 2141, 402, 34], ['Q2', 2647, 402, 38], ['Q4', 2141, 865, 38], ['Q3', 2647, 865, 38]],
  },
};

const SAMPLE_UNGATED = {
  name: 'M0 CD11b+CD86.fcs: Ungated - ...',
  frame: 'w-[864px] h-[987px] mt-[42px] border-x-2 border-[#d0e4e5]',
  header: 'h-[58px]',
  icon: 'ml-[19px] mt-[2px] w-[36px] h-[39px]',
  title: 'ml-[11px] w-[541px] text-[35px] leading-[42px]',
  minimise: 'ml-[35px] mt-[17px] w-[17px]',
  maximise: 'ml-[40px] mt-[3px] w-[22px] h-[19px]',
  close: 'ml-[17px] w-[98px] h-[36px] pb-[6px]',
  inner: 'ml-[13px] w-[834px]',
  menu: 'h-[47px]',
  menuText: 'ml-[8px] w-[456px] text-[28px] leading-[41px]',
  toolbar: 'ml-[4px] h-[44px]',
  tools: 'w-[438px]',
  history: 'ml-[98px] w-[96px]',
  arrows: 'ml-[45px] w-[145px]',
  crumbs: 'h-[58px]',
  crumb1: 'ml-[18px]',
  tube: 'ml-[33px] w-[18px] h-[29px]',
  crumb2: 'ml-[40px]',
  main: 'h-[699px]',
  sidebar: 'ml-[18px] w-[56px]',
  textTop: 'mt-[55px] w-[56px] h-[57px] text-[53px]',
  yBar: 'mt-[12px] w-[46px] h-[496px]',
  yText: 'w-[188px] text-[27px]',
  yArrow: 'mb-[18px] w-[20px] h-[16px]',
  yAxis: 'SSC-A :: SSC-A',
  footer: 'h-[77px]',
  cube: 'ml-[26px] w-[61px] h-[54px]',
  overlay: 'ml-[4px] w-[61px] h-[54px]',
  xBar: 'ml-[55px] w-[484px] h-[46px]',
  xText: 'w-[182px] text-[27px]',
  xArrow: 'mr-[18px] w-[19px] h-[17px]',
  xAxis: 'FSC-A :: FSC-A',
  textBottom: 'ml-[26px] w-[56px] h-[57px] text-[53px]',
  plot: {
    className: 'w-[756px] h-[699px]',
    view: '691 1630 756 699',
    seed: 21,
    left: 841, top: 1664.5, right: 1370, bottom: 2177,
    x0: 893, x5: 141.6, y0: 2126.3, y5: 137.3,
    cell: 2.2,
    limits: [0.12, 2.3, 3.4, 4.4, 5.8, 15, 34, 50, 70],
    font: 25,
    handle: 18,
    gate: [[883.5, 2132], [927.5, 2091.5], [1011.5, 2062], [1154, 2023], [1065.5, 2112], [1000.5, 2130]],
    labels: [
      ['15M', 769, 1731, 45], ['10M', 769, 1869, 45], ['5.0M', 763, 2005, 51], ['0', 800, 2142.5, 13],
      ['0', 875.5, 2249, 13], ['5.0M', 1000, 2249, 51], ['10M', 1143, 2249, 45], ['15M', 1285, 2249, 45],
      ['macrophages', 913, 1938.5, 169], ['95.6%', 959, 1979, 77],
    ],
  },
};

const SAMPLE_GATED = {
  child: true,
  name: 'M0 CD11b+CD86.fcs: macropha...',
  frame: 'ml-[97px] w-[873px] h-[1000px] mt-[27px]',
  header: 'h-[70px]',
  icon: 'ml-[19px] mt-[12px] w-[36px] h-[39px]',
  title: 'ml-[12px] mt-[7px] w-[546px] text-[35px] leading-[50px]',
  minimise: 'ml-[44px] mt-[26px] w-[18px]',
  maximise: 'ml-[41px] mt-[12px] w-[22px] h-[20px]',
  close: 'ml-[19px] w-[100px] h-[46px]',
  inner: 'ml-[8px] w-[859px]',
  menu: 'h-[47px]',
  menuText: 'ml-[9px] w-[469px] text-[28px] leading-[42px]',
  toolbar: 'ml-[4px] h-[43px]',
  tools: 'w-[451px]',
  history: 'ml-[51px] w-[100px]',
  arrows: 'ml-[46px] w-[200px]',
  crumbs: 'h-[58px]',
  crumb1: 'ml-[18px]',
  tube: 'ml-[35px] w-[19px] h-[28px]',
  crumb2: 'ml-[40px]',
  cells: 'ml-[29px] w-[32px] h-[25px]',
  population: 'ml-[11px] w-[153px] text-[27px]',
  crumb3: 'ml-[18px]',
  main: 'h-[666px]',
  sidebar: 'ml-[18px] w-[57px]',
  textTop: 'mt-[52px] w-[57px] h-[57px] text-[53px]',
  yBar: 'mt-[12px] w-[48px] h-[485px]',
  yText: 'w-[244px] text-[27px]',
  yArrow: 'mb-[17px] w-[21px] h-[17px]',
  yAxis: 'FL2-H :: CD86-PE-H',
  footer: 'h-[108px]',
  cube: 'ml-[26px] w-[63px] h-[53px]',
  overlay: 'ml-[3px] w-[63px] h-[53px]',
  xBar: 'ml-[58px] w-[500px] h-[46px]',
  grid: 'w-[29px] h-[29px]',
  xText: 'w-[369px] text-[27px]',
  xArrow: 'mr-[17px] w-[20px] h-[17px]',
  xAxis: 'Comp-FL1-A :: CD11b-FITC-A',
  textBottom: 'ml-[26px] w-[59px] h-[57px] text-[53px]',
  panel: 'ml-[25px] w-[805px] border-[#b9b6bb]',
  plot: {
    className: 'w-[780px] h-[666px]',
    view: '1989 1626 780 666',
    events: stainedEvents,
    piled: true,
    left: 2134, top: 1628, right: 2682, bottom: 2155.5,
    crossX: 2359.5, crossY: 1939, crossWidth: 5,
    cell: 2.6,
    limits: [0.15, 1.1, 1.6, 2.1, 2.7, 6.6, 7.6, 8.8, 9.8],
    font: 25,
    yMajors: [2155.5, 2082, 2010, 1936, 1864, 1790, 1718, 1644],
    xMajors: [2134.5, 2208.5, 2284, 2359.5, 2435.5, 2511, 2586, 2664],
    yLabelX: 2064, tenWidth: 27, digit: 14, lift: 21,
    yLabels: [2155, 2100, 2027.5, 1954, 1881.5, 1807, 1735, 1676],
    xLabels: [2143, 2270, 2422, 2573.5], xLabelY: 2229.5,
    labels: [
      ['Q1', 2147, 1681.5, 32], ['15.0%', 2147, 1724, 78], ['Q2', 2594, 1681.5, 36], ['70.9%', 2551, 1724, 79],
      ['Q4', 2147, 2080.5, 36], ['7.95%', 2147, 2123, 78], ['Q3', 2594, 2080.5, 36], ['6.21%', 2551, 2123, 79],
    ],
  },
};

function BlueArrow({ className }) {
  return (
    <svg viewBox="0 0 277 66" className={`h-[66px] w-[277px] shrink-0 ${className}`}>
      <path d="M0 29 H212 L194 0 L277 33 L194 66 L212 37 H0 Z" fill="#1f7bff" />
    </svg>
  );
}

export default function App() {
  return (
    <main className="h-[2488px] w-[3392px] overflow-hidden bg-white">
      <div className="flex h-[1243px] items-start pl-[345px]">
        <h2 className="mt-[86px] w-[212px] font-['Liberation_Sans',Arial,sans-serif] text-[76px] leading-none text-[#141414]">A</h2>
        <FlowWindow w={CONTROL_UNGATED} />
        <BlueArrow className="mt-[552px] ml-[33px]" />
        <FlowWindow w={CONTROL_GATED} />
      </div>
      <svg viewBox="0 0 70 134" className="ml-[1628px] block h-[134px] w-[70px]">
        <path d="M30 0 H39 V68 L69 51 L34.500 134 L0 51 L30 68 Z" fill="#40ff00" />
      </svg>
      <div className="flex items-start pl-[345px]">
        <h2 className="mt-[47px] w-[255px] font-['Liberation_Sans',Arial,sans-serif] text-[76px] leading-none text-[#141414]">B</h2>
        <FlowWindow w={SAMPLE_UNGATED} />
        <BlueArrow className="mt-[507px] ml-[66px]" />
        <FlowWindow w={SAMPLE_GATED} />
      </div>
    </main>
  );
}
